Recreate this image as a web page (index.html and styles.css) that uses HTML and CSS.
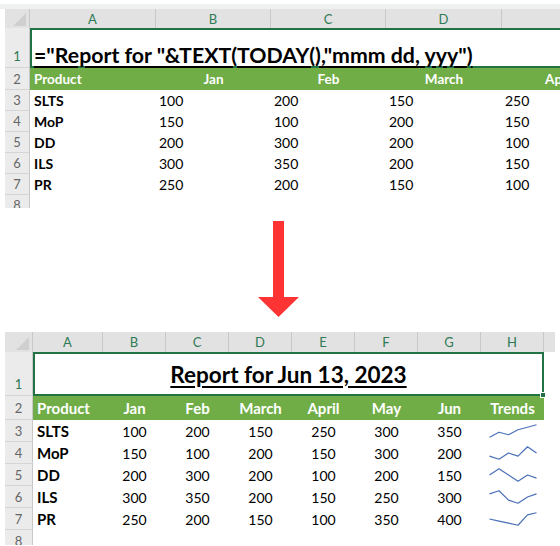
FILE: index.html
```html
<!DOCTYPE html>
<html>
<head>
<meta charset="utf-8">
<link rel="stylesheet" href="styles.css">
</head>
<body>
<div class="band"></div>
<div class="sheet sheet-top">
  <div class="grid grid-top">
    <div class="corner"><span class="tri"></span></div>
    <div class="colh">A</div>
    <div class="colh">B</div>
    <div class="colh">C</div>
    <div class="colh">D</div>
    <div class="colh"></div>

    <div class="rowh rowh-sel rowh-bottom">1</div>
    <div class="title-top"><span class="uline">="Report for "&amp;TEXT(TODAY(),"mmm dd, yyy")</span></div>

    <div class="rowh">2</div>
    <div class="hdr hdr-top hdr-left">Product</div>
    <div class="hdr hdr-top">Jan</div>
    <div class="hdr hdr-top">Feb</div>
    <div class="hdr hdr-top">March</div>
    <div class="hdr hdr-top">April</div>

    <div class="rowh">3</div>
    <div class="lbl lbl-top">SLTS</div><div class="num-top">100</div><div class="num-top">200</div><div class="num-top">150</div><div class="num-top">250</div>
    <div class="rowh">4</div>
    <div class="lbl lbl-top">MoP</div><div class="num-top">150</div><div class="num-top">100</div><div class="num-top">200</div><div class="num-top">150</div>
    <div class="rowh">5</div>
    <div class="lbl lbl-top">DD</div><div class="num-top">200</div><div class="num-top">300</div><div class="num-top">200</div><div class="num-top">100</div>
    <div class="rowh">6</div>
    <div class="lbl lbl-top">ILS</div><div class="num-top">300</div><div class="num-top">350</div><div class="num-top">200</div><div class="num-top">150</div>
    <div class="rowh">7</div>
    <div class="lbl lbl-top">PR</div><div class="num-top">250</div><div class="num-top">200</div><div class="num-top">150</div><div class="num-top">100</div>
    <div class="rowh">8</div>
    <div class="blank span-top"></div>
  </div>
</div>

<div class="arrow-box">
  <svg class="arrow" width="41" height="96" viewBox="0 0 41 96"><polygon points="15,0 26,0 26,76 41,76 20.5,96 0,76 15,76" fill="#fe3434"/></svg>
</div>

<div class="sheet sheet-bot">
  <div class="grid grid-bot">
    <div class="corner corner-bot"><span class="tri"></span></div>
    <div class="colh">A</div>
    <div class="colh">B</div>
    <div class="colh">C</div>
    <div class="colh">D</div>
    <div class="colh">E</div>
    <div class="colh">F</div>
    <div class="colh">G</div>
    <div class="colh">H</div>
    <div class="colh colh-extra"></div>

    <div class="rowh rowh-sel rowh-bottom">1</div>
    <div class="title-bot"><span class="uline">Report for Jun 13, 2023</span><span class="handle"></span></div>
    <div class="blank"></div>

    <div class="rowh">2</div>
    <div class="hdr hdr-bot hdr-left">Product</div>
    <div class="hdr hdr-bot">Jan</div>
    <div class="hdr hdr-bot">Feb</div>
    <div class="hdr hdr-bot">March</div>
    <div class="hdr hdr-bot">April</div>
    <div class="hdr hdr-bot">May</div>
    <div class="hdr hdr-bot">Jun</div>
    <div class="hdr hdr-bot">Trends</div>
    <div class="blank"></div>

    <div class="rowh">3</div>
    <div class="lbl lbl-bot">SLTS</div><div class="num-bot">100</div><div class="num-bot">200</div><div class="num-bot">150</div><div class="num-bot">250</div><div class="num-bot">300</div><div class="num-bot">350</div>
    <div class="spark"><svg width="48" height="14" viewBox="0 0 48 14"><polyline points="0.5,13.25 10,8.25 19.5,10.75 29,5.75 38.5,3.25 47.5,0.75"/></svg></div>
    <div class="blank"></div>

    <div class="rowh">4</div>
    <div class="lbl lbl-bot">MoP</div><div class="num-bot">150</div><div class="num-bot">100</div><div class="num-bot">200</div><div class="num-bot">150</div><div class="num-bot">300</div><div class="num-bot">200</div>
    <div class="spark"><svg width="48" height="14" viewBox="0 0 48 14"><polyline points="0.5,10.1 10,13.25 19.5,7 29,10.1 38.5,0.75 47.5,7"/></svg></div>
    <div class="blank"></div>

    <div class="rowh">5</div>
    <div class="lbl lbl-bot">DD</div><div class="num-bot">200</div><div class="num-bot">300</div><div class="num-bot">200</div><div class="num-bot">100</div><div class="num-bot">200</div><div class="num-bot">150</div>
    <div class="spark"><svg width="48" height="14" viewBox="0 0 48 14"><polyline points="0.5,7 10,0.75 19.5,7 29,13.25 38.5,7 47.5,10.1"/></svg></div>
    <div class="blank"></div>

    <div class="rowh">6</div>
    <div class="lbl lbl-bot">ILS</div><div class="num-bot">300</div><div class="num-bot">350</div><div class="num-bot">200</div><div class="num-bot">150</div><div class="num-bot">250</div><div class="num-bot">300</div>
    <div class="spark"><svg width="48" height="14" viewBox="0 0 48 14"><polyline points="0.5,3.9 10,0.75 19.5,10.1 29,13.25 38.5,7 47.5,3.9"/></svg></div>
    <div class="blank"></div>

    <div class="rowh">7</div>
    <div class="lbl lbl-bot">PR</div><div class="num-bot">250</div><div class="num-bot">200</div><div class="num-bot">150</div><div class="num-bot">100</div><div class="num-bot">350</div><div class="num-bot">400</div>
    <div class="spark"><svg width="48" height="14" viewBox="0 0 48 14"><polyline points="0.5,7 10,9.1 19.5,11.2 29,13.25 38.5,2.8 47.5,0.75"/></svg></div>
    <div class="blank"></div>

    <div class="rowh">8</div>
    <div class="blank span-bot"></div>
  </div>
</div>
</body>
</html>
```

FILE: styles.css
```css
* { box-sizing: border-box; }

html, body {
  margin: 0;
  padding: 0;
  background: #ffffff;
  width: 560px;
  height: 546px;
  overflow: hidden;
  font-family: Lato, "Open Sans", "DejaVu Sans", sans-serif;
  color: #000;
}

.band {
  height: 5px;
  margin-top: 4px;
  background: #eef1f0;
}

.sheet {
  margin-left: 5px;
  overflow: hidden;
}

.sheet-top {
  width: 555px;
  height: 199px;
}

.sheet-bot {
  width: 550px;
  height: 213px;
}

.grid {
  display: grid;
}

.grid-top {
  width: 612px;
  grid-template-columns: 25px 126px 115px 115px 116px 115px;
  grid-template-rows: 19px 40px 22px repeat(5, 21px) 21px;
}

.grid-bot {
  width: 550px;
  grid-template-columns: 28px 70px repeat(7, 63px) 11px;
  grid-template-rows: 20px 44px 24px repeat(6, 22px);
}

.corner {
  background: #e2e2e2;
  border-right: 1px solid #c8c8c8;
  display: flex;
  justify-content: flex-end;
  align-items: flex-end;
  padding: 0 3px 2px 0;
}

.tri {
  width: 13px;
  height: 13px;
  background: #cfcfcf;
  clip-path: polygon(100% 0, 100% 100%, 0 100%);
}

.colh {
  background: #e2e2e2;
  border-right: 1px solid #c8c8c8;
  color: #2e7a55;
  font-size: 13px;
  display: flex;
  align-items: center;
  justify-content: center;
}

.colh-extra {
  border-right: none;
}

.rowh {
  background: #ebebeb;
  border-bottom: 1px solid #d6d6d6;
  border-right: 1px solid #c8c8c8;
  color: #666;
  font-size: 13px;
  display: flex;
  align-items: center;
  justify-content: center;
}

.rowh-sel {
  color: #2e7a55;
}

.rowh-bottom {
  align-items: flex-end;
  padding-bottom: 3px;
}

.title-top {
  grid-column: 2 / -1;
  border-top: 2px solid #217346;
  border-left: 2px solid #217346;
  border-bottom: 2px solid #217346;
  display: flex;
  align-items: flex-end;
  padding: 0 0 0 2px;
  font-weight: 700;
  font-size: 21.3px;
  line-height: 1;
  white-space: nowrap;
}

.title-bot {
  grid-column: 2 / 10;
  border: 2px solid #217346;
  position: relative;
  display: flex;
  align-items: center;
  justify-content: center;
  font-weight: 700;
  font-size: 22.5px;
  white-space: nowrap;
}

.uline {
  text-decoration: underline;
  text-decoration-thickness: 2px;
  text-underline-offset: 3px;
}

.handle {
  position: absolute;
  right: -4px;
  bottom: -4px;
  width: 6px;
  height: 6px;
  background: #217346;
  border: 1px solid #fff;
}

.hdr {
  background: #70ad47;
  color: #fff;
  font-weight: 700;
  display: flex;
  align-items: center;
  justify-content: center;
  white-space: nowrap;
}

.hdr-top { font-size: 13.5px; }
.hdr-bot { font-size: 15px; }

.hdr-left {
  justify-content: flex-start;
  padding-left: 4px;
}

.lbl {
  font-weight: 700;
  display: flex;
  align-items: center;
  padding-left: 4px;
}

.lbl-top { font-size: 14px; }
.lbl-bot { font-size: 15px; }

.num-top {
  font-size: 14px;
  display: flex;
  align-items: center;
  padding-left: 3px;
}

.num-bot {
  font-size: 14px;
  display: flex;
  align-items: center;
  justify-content: center;
}

.spark {
  display: flex;
  align-items: center;
  justify-content: center;
}

.spark polyline {
  fill: none;
  stroke: #4a70b8;
  stroke-width: 1.2;
  stroke-linejoin: round;
}

.span-top { grid-column: 2 / -1; }
.span-bot { grid-column: 2 / -1; }

.arrow-box {
  height: 124px;
  padding: 13px 0 0 258px;
  display: flex;
  align-items: flex-start;
}
```
